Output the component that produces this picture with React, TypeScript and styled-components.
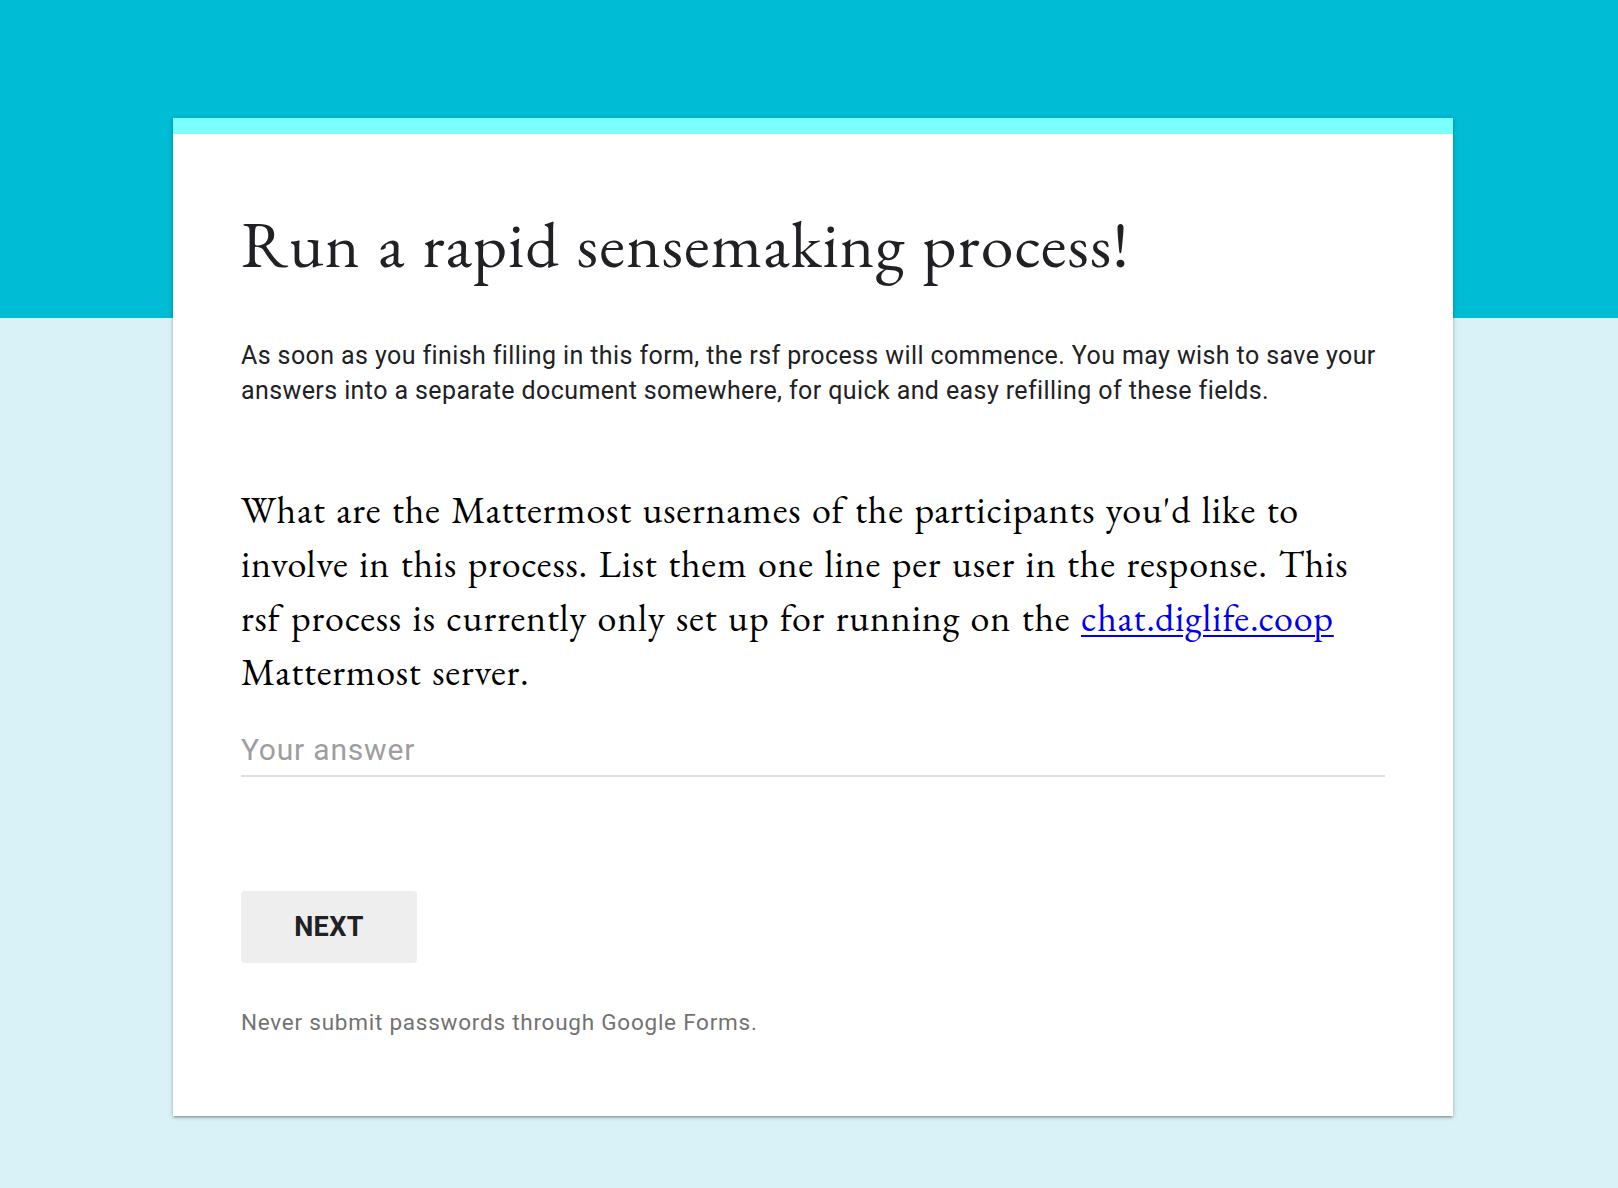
import React from "react";
import styled, { createGlobalStyle } from "styled-components";

const GlobalStyle = createGlobalStyle`
  html, body {
    margin: 0;
    padding: 0;
  }
  body {
    font-family: Roboto, "Liberation Sans", Arial, sans-serif;
    background: #d9f2f7;
  }
`;

const Page = styled.div`
  min-height: 1188px;
  box-sizing: border-box;
  background: linear-gradient(#00bcd4 0, #00bcd4 318px, #d9f2f7 318px);
  padding: 118px 0 71px 8px;
`;

const Card = styled.div`
  width: 1280px;
  margin: 0 auto;
  background: #ffffff;
  border-top: 16px solid #7bffff;
  box-shadow: 0 2px 2px rgba(0, 0, 0, 0.14), 0 3px 1px -2px rgba(0, 0, 0, 0.12),
    0 1px 5px rgba(0, 0, 0, 0.2);
  padding: 74px 68px 79px;
  box-sizing: border-box;
  display: flex;
  flex-direction: column;
`;

const Title = styled.h1`
  margin: 0;
  font-family: "EB Garamond", "Liberation Serif", "Times New Roman", serif;
  font-weight: 400;
  font-size: 66px;
  letter-spacing: 1px;
  word-spacing: 3px;
  line-height: 72px;
  color: #202124;
  white-space: nowrap;
`;

const Description = styled.p`
  margin: 58px 0 0;
  font-family: Roboto, "Liberation Sans", sans-serif;
  font-size: 25px;
  letter-spacing: 0.4px;
  line-height: 35px;
  color: #202124;
  white-space: nowrap;
`;

const Question = styled.div`
  margin-top: 75px;
  font-family: "EB Garamond", "Liberation Serif", "Times New Roman", serif;
  font-size: 38px;
  letter-spacing: 0.8px;
  word-spacing: 2.2px;
  line-height: 54px;
  color: #000000;
`;

const Line = styled.span`
  display: block;
  white-space: nowrap;
`;

const Link = styled.a`
  color: #0000ee;
  text-decoration: underline;
  text-underline-offset: 4px;
  text-decoration-thickness: 2px;
`;

const AnswerField = styled.div`
  margin-top: 33px;
  border-bottom: 2px solid #e0e0e0;
  padding-bottom: 7px;
`;

const Placeholder = styled.span`
  display: block;
  font-family: Roboto, "Liberation Sans", sans-serif;
  font-size: 30px;
  letter-spacing: 0.8px;
  line-height: 36px;
  color: #9e9e9e;
`;

const NextButton = styled.button`
  margin-top: 114px;
  align-self: flex-start;
  width: 176px;
  height: 72px;
  padding: 0;
  border: none;
  border-radius: 4px;
  background: #eeeeee;
  font-family: Roboto, "Liberation Sans", sans-serif;
  font-weight: 700;
  font-size: 27px;
  letter-spacing: 0.4px;
  color: #202124;
  cursor: pointer;
`;

const Footer = styled.p`
  margin: 44px 0 0;
  font-family: Roboto, "Liberation Sans", sans-serif;
  font-size: 22.5px;
  letter-spacing: 0.76px;
  line-height: 30px;
  color: #727272;
`;

export default function App() {
  return (
    <>
      <GlobalStyle />
      <Page>
        <Card>
          <Title>Run a rapid sensemaking process!</Title>
          <Description>
            As soon as you finish filling in this form, the rsf process will commence. You may wish to save your
            <br />
            answers into a separate document somewhere, for quick and easy refilling of these fields.
          </Description>
          <Question>
            <Line>What are the Mattermost usernames of the participants you'd like to</Line>
            <Line>involve in this process. List them one line per user in the response. This</Line>
            <Line>
              rsf process is currently only set up for running on the <Link href="#">chat.diglife.coop</Link>
            </Line>
            <Line>Mattermost server.</Line>
          </Question>
          <AnswerField>
            <Placeholder>Your answer</Placeholder>
          </AnswerField>
          <NextButton>NEXT</NextButton>
          <Footer>Never submit passwords through Google Forms.</Footer>
        </Card>
      </Page>
    </>
  );
}
